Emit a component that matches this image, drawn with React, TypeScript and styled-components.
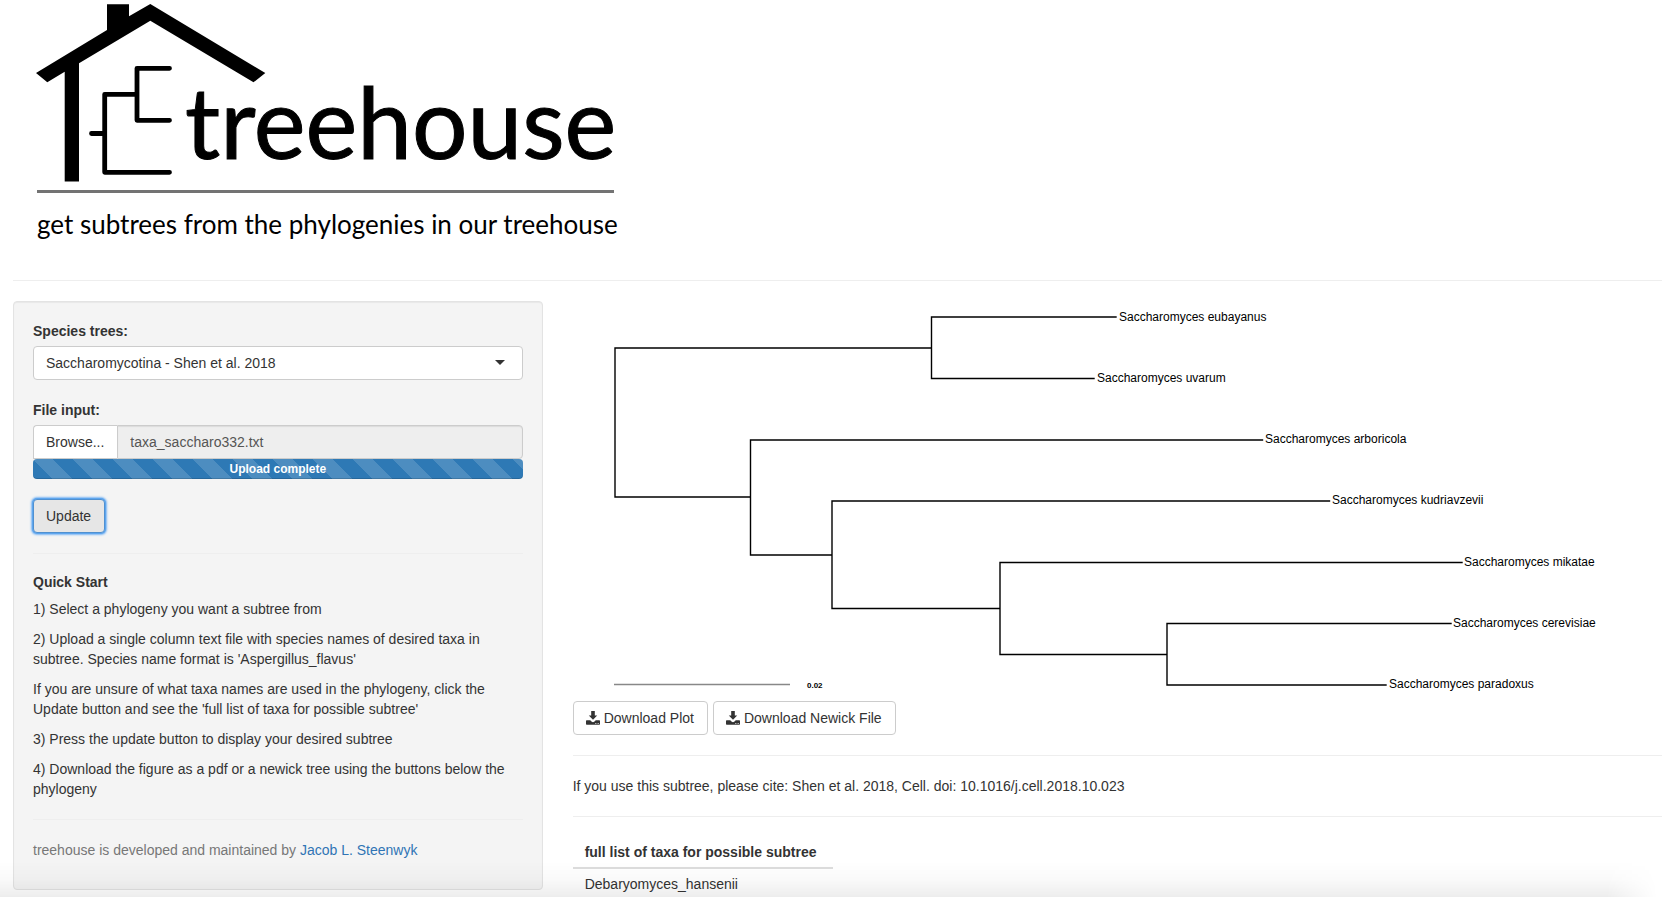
import React, { useId, useRef, useState } from "react";
import styled, { createGlobalStyle, css } from "styled-components";

const GlobalStyle = createGlobalStyle`
  *, *::before, *::after { box-sizing: border-box; }
  body {
    margin: 0;
    background: #fff;
    color: #333;
    font-family: "Helvetica Neue", Helvetica, "Liberation Sans", Arial, sans-serif;
    font-size: 14px;
    line-height: 20px;
  }
  button, input, select { font: inherit; color: inherit; }
`;

const Page = styled.div`
  padding: 0 15px 0 13px;
`;

const Header = styled.header`
  height: 260px;
`;

const LogoSvg = styled.svg`
  display: block;
`;

const Divider = styled.hr`
  margin: 20px 0;
  border: 0;
  border-top: 1px solid #eee;
`;

const Row = styled.div`
  display: grid;
  grid-template-columns: minmax(0, 4fr) minmax(0, 8fr);
  align-items: start;
  margin: 0 -15px;
`;

const Column = styled.div`
  padding: 0 15px;
`;

const Well = styled.form`
  padding: 19px;
  margin-bottom: 20px;
  background: #f4f4f4;
  border: 1px solid #e3e3e3;
  border-radius: 4px;
  box-shadow: inset 0 1px 1px rgba(0, 0, 0, 0.05);
`;

const Field = styled.div`
  margin-bottom: 20px;
`;

const FieldLabel = styled.label`
  display: block;
  margin-bottom: 5px;
  font-weight: 700;
`;

const SelectWrap = styled.div`
  position: relative;
`;

const Select = styled.select`
  display: block;
  width: 100%;
  height: 34px;
  padding: 0 32px 0 12px;
  appearance: none;
  background: #fff;
  border: 1px solid #ccc;
  border-radius: 4px;
`;

const Caret = styled.span`
  position: absolute;
  top: 14px;
  right: 18px;
  border: 5px solid transparent;
  border-top-color: #333;
  border-bottom-width: 0;
  pointer-events: none;
`;

const buttonBase = css`
  height: 34px;
  padding: 0 13px 0 12px;
  background: #fff;
  border: 1px solid #ccc;
  border-radius: 4px;
  cursor: pointer;
`;

const InputGroup = styled.div`
  display: flex;
`;

const BrowseButton = styled.button`
  ${buttonBase}
  border-right: 0;
  border-radius: 4px 0 0 0;
`;

const FileName = styled.input`
  flex: 1;
  min-width: 0;
  height: 34px;
  padding: 0 12px;
  color: #555;
  background: #eee;
  border: 1px solid #ccc;
  border-radius: 0 4px 4px 0;
  box-shadow: inset 0 1px 1px rgba(0, 0, 0, 0.08);
`;

const Progress = styled.div`
  height: 20px;
  border-radius: 4px;
  overflow: hidden;
  background-color: #2e79b5;
  background-image: linear-gradient(
    45deg,
    rgba(255, 255, 255, 0.15) 25%,
    transparent 25%,
    transparent 50%,
    rgba(255, 255, 255, 0.15) 50%,
    rgba(255, 255, 255, 0.15) 75%,
    transparent 75%
  );
  background-size: 40px 40px;
  box-shadow: inset 0 -1px 0 rgba(0, 0, 0, 0.15);
  color: #fff;
  font-size: 12px;
  font-weight: 700;
  text-align: center;
`;

const UpdateButton = styled.button`
  ${buttonBase}
  display: block;
  background: #e6e6e6;
  border-color: #5090d0;
  outline: none;
  box-shadow: 0 0 0 1px #5ea6ee, 0 0 2px 2px #7fb8f4;
`;

const QuickTitle = styled.h5`
  margin: 0 0 9px;
  font-size: 14px;
  font-weight: 700;
  line-height: 16px;
`;

const Paragraph = styled.p<{ $muted?: boolean }>`
  margin: 0 0 10px;
  color: ${(p) => (p.$muted ? "#777" : "inherit")};
`;

const Link = styled.a`
  color: #3074b5;
  text-decoration: none;
`;

const Plot = styled.svg`
  display: block;
  width: 100%;
  height: 400px;
`;

const Branches = styled.path`
  fill: none;
  stroke: #000;
  stroke-width: 1.4;
  stroke-linecap: square;
`;

const TipLabel = styled.text`
  font-size: 12px;
  fill: #000;
`;

const ScaleLabel = styled.text`
  font-size: 8px;
  font-weight: 700;
  fill: #000;
`;

const ButtonRow = styled.div`
  display: flex;
  gap: 5px;
`;

const DownloadButton = styled.button`
  ${buttonBase}
  display: flex;
  align-items: center;
  gap: 4px;
`;

const TaxaTable = styled.table`
  width: 260px;
  border-collapse: collapse;

  th,
  td {
    padding: 5px 12px;
    text-align: left;
    white-space: nowrap;
  }
  th {
    border-bottom: 2px solid #ddd;
  }
`;

const BottomShade = styled.div`
  position: fixed;
  left: 0;
  right: 20px;
  bottom: 0;
  height: 36px;
  background: linear-gradient(to bottom, rgba(0, 0, 0, 0), rgba(0, 0, 0, 0.02) 50%, rgba(0, 0, 0, 0.07));
  mask-image: linear-gradient(to left, transparent, #000 50px);
  pointer-events: none;
`;

const WordMark = styled.text`
  font-family: Lato, sans-serif;
  font-size: 98px;
  stroke: #000;
  stroke-width: 1px;
`;

const Tagline = styled.text`
  font-family: Lato, sans-serif;
  font-size: 26px;
`;

function Logo() {
  return (
    <LogoSvg width="620" height="260" viewBox="13 0 620 260" role="img" aria-label="treehouse">
      <path d="M36 73 L107 30 V4.300 H129 V16.300 L150.300 4 L265.300 73 L253.500 82.300 L150.300 20.700 L79 63.300 V181.500 H64.700 V71.800 L47.300 82.300 Z" />
      <path
        d="M169.500 68.300 H137 V120.300 H169.500 M137 94.300 H104.700 V172.300 H169.500 M91.500 133.500 H104.700"
        fill="none"
        stroke="#000"
        strokeWidth="4.800"
        strokeLinecap="round"
        strokeLinejoin="round"
      />
      <WordMark x="185" y="159">treehouse</WordMark>
      <path d="M37 191.500 H614" stroke="#737373" strokeWidth="3" />
      <Tagline x="37" y="234">get subtrees from the phylogenies in our treehouse</Tagline>
    </LogoSvg>
  );
}

function DownloadIcon() {
  return (
    <svg width="14" height="14" viewBox="0 0 14 14" fill="#333" aria-hidden="true">
      <path d="M5.200 0 H8.800 V4.400 H11.200 L7 8.800 L2.800 4.400 H5.200 Z" />
      <path
        fillRule="evenodd"
        d="M.7 9.200 H4.200 L5.800 10.700 Q7 11.600 8.200 10.700 L9.800 9.200 H13.300 Q14 9.200 14 9.900 V13 Q14 13.700 13.300 13.700 H.7 Q0 13.700 0 13 V9.900 Q0 9.200 .7 9.200 Z M9.400 12 V12.900 H10.300 V12 Z M11.700 12 V12.900 H12.600 V12 Z"
      />
    </svg>
  );
}

/* Tip labels of the phylogeny; x is where the label starts, y is its branch. */
const tips = [
  { name: "Saccharomyces eubayanus", x: 546, y: 16 },
  { name: "Saccharomyces uvarum", x: 524, y: 77 },
  { name: "Saccharomyces arboricola", x: 692, y: 138 },
  { name: "Saccharomyces kudriavzevii", x: 759, y: 199 },
  { name: "Saccharomyces mikatae", x: 891, y: 261 },
  { name: "Saccharomyces cerevisiae", x: 880, y: 322 },
  { name: "Saccharomyces paradoxus", x: 816, y: 383 },
];

const branches = [
  "M42 196 V47 H358.500",
  "M543 16 H358.500 V77.500 H521",
  "M42 196 H177.500",
  "M689.500 139 H177.500 V254 H259",
  "M756.500 200 H259 V307.500 H427",
  "M889 261.500 H427 V353.500 H594",
  "M878 322.500 H594 V384 H813",
].join(" ");

function Phylogeny() {
  return (
    <Plot role="img" aria-label="Subtree of seven Saccharomyces species">
      <Branches d={branches} />
      <path d="M41 383.500 H217" stroke="#888" strokeWidth="1.500" />
      <ScaleLabel x="234" y="387">0.02</ScaleLabel>
      {tips.map((tip) => (
        <TipLabel key={tip.name} x={tip.x} y={tip.y + 4}>
          {tip.name}
        </TipLabel>
      ))}
    </Plot>
  );
}

export default function App() {
  const treeId = useId();
  const fileId = useId();
  const picker = useRef<HTMLInputElement>(null);
  const [fileName, setFileName] = useState("taxa_saccharo332.txt");

  return (
    <>
      <GlobalStyle />
      <Page>
        <Header>
          <Logo />
        </Header>
        <Divider />
        <Row>
          <Column>
            <Well onSubmit={(e) => e.preventDefault()}>
              <Field>
                <FieldLabel htmlFor={treeId}>Species trees:</FieldLabel>
                <SelectWrap>
                  <Select id={treeId}>
                    <option>Saccharomycotina - Shen et al. 2018</option>
                  </Select>
                  <Caret />
                </SelectWrap>
              </Field>
              <Field>
                <FieldLabel htmlFor={fileId}>File input:</FieldLabel>
                <InputGroup>
                  <BrowseButton type="button" onClick={() => picker.current?.click()}>
                    Browse...
                  </BrowseButton>
                  <input
                    ref={picker}
                    type="file"
                    hidden
                    onChange={(e) => setFileName(e.target.files?.[0]?.name ?? fileName)}
                  />
                  <FileName id={fileId} type="text" readOnly value={fileName} />
                </InputGroup>
                <Progress>Upload complete</Progress>
              </Field>
              <UpdateButton type="submit">Update</UpdateButton>
              <Divider />
              <QuickTitle>Quick Start</QuickTitle>
              <Paragraph>1) Select a phylogeny you want a subtree from</Paragraph>
              <Paragraph>
                2) Upload a single column text file with species names of desired taxa in subtree.
                Species name format is 'Aspergillus_flavus'
              </Paragraph>
              <Paragraph>
                If you are unsure of what taxa names are used in the phylogeny, click the Update
                button and see the 'full list of taxa for possible subtree'
              </Paragraph>
              <Paragraph>3) Press the update button to display your desired subtree</Paragraph>
              <Paragraph>
                4) Download the figure as a pdf or a newick tree using the buttons below the
                phylogeny
              </Paragraph>
              <Divider />
              <Paragraph $muted>
                treehouse is developed and maintained by <Link href="#">Jacob L. Steenwyk</Link>
              </Paragraph>
            </Well>
          </Column>
          <Column as="main">
            <Phylogeny />
            <ButtonRow>
              <DownloadButton type="button">
                <DownloadIcon />
                Download Plot
              </DownloadButton>
              <DownloadButton type="button">
                <DownloadIcon />
                Download Newick File
              </DownloadButton>
            </ButtonRow>
            <Divider />
            <div>If you use this subtree, please cite: Shen et al. 2018, Cell. doi: 10.1016/j.cell.2018.10.023</div>
            <Divider />
            <TaxaTable>
              <thead>
                <tr>
                  <th scope="col">full list of taxa for possible subtree</th>
                </tr>
              </thead>
              <tbody>
                <tr>
                  <td>Debaryomyces_hansenii</td>
                </tr>
              </tbody>
            </TaxaTable>
          </Column>
        </Row>
      </Page>
      <BottomShade />
    </>
  );
}
